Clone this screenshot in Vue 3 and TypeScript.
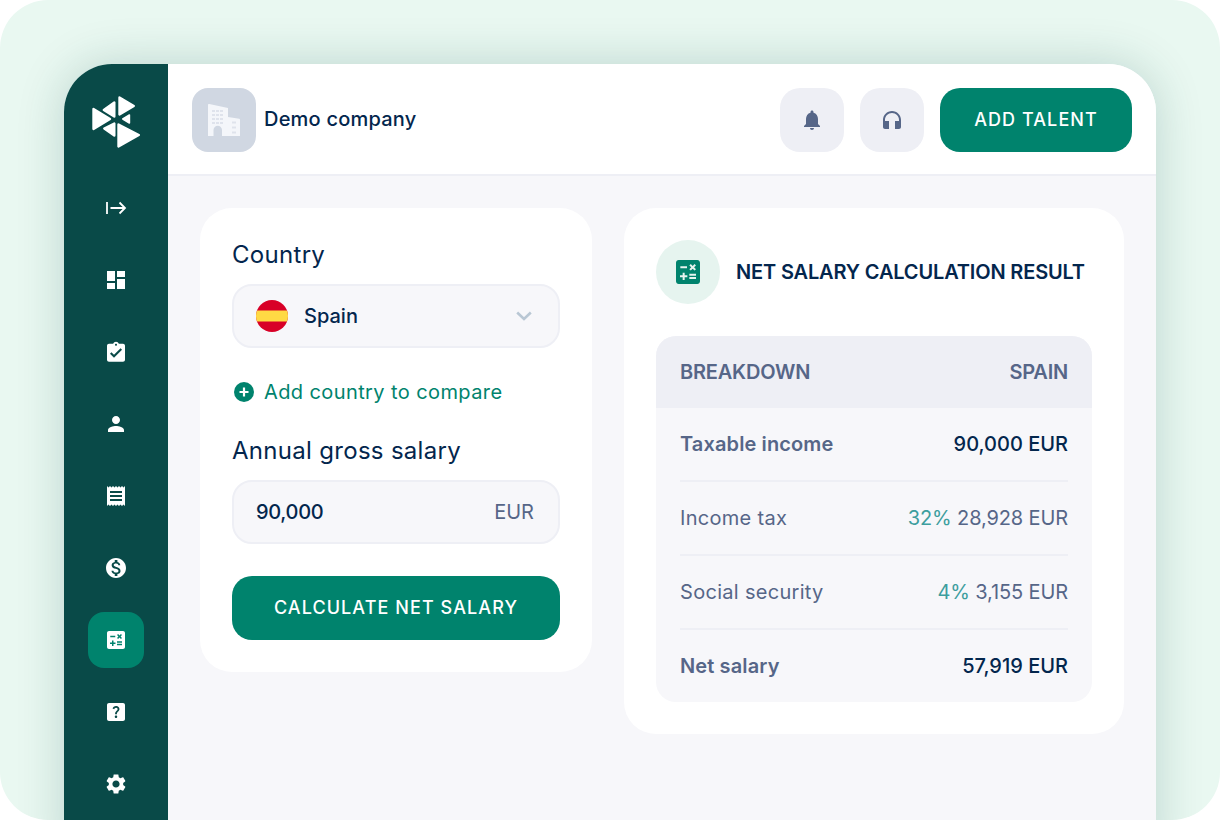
<script setup lang="ts">
const navIcons = [
  { id: 'dashboard', d: 'M3 13h8V3H3v10zm0 8h8v-6H3v6zm10 0h8V11h-8v10zm0-18v6h8V3h-8z' },
  { id: 'tasks', shift: 'translate(0 .7)', d: 'M19 3h-4.18C14.4 1.84 13.3 1 12 1c-1.3 0-2.4.84-2.82 2H5c-1.1 0-2 .9-2 2v14c0 1.1.9 2 2 2h14c1.1 0 2-.9 2-2V5c0-1.1-.9-2-2-2zm-7 0c.55 0 1 .45 1 1s-.45 1-1 1-1-.45-1-1 .45-1 1-1zm-2 14l-4-4 1.41-1.41L10 14.17l6.59-6.59L18 9l-8 8z' },
  { id: 'person', d: 'M12 12c2.21 0 4-1.79 4-4s-1.79-4-4-4-4 1.79-4 4 1.79 4 4 4zm0 2c-2.67 0-8 1.34-8 4v2h16v-2c0-2.66-5.33-4-8-4z' },
  { id: 'receipt', d: 'M18 17H6v-2h12v2zm0-4H6v-2h12v2zm0-4H6V7h12v2zM3 22l1.5-1.5L6 22l1.5-1.5L9 22l1.5-1.5L12 22l1.5-1.5L15 22l1.5-1.5L18 22l1.5-1.5L21 22V2l-1.5 1.5L18 2l-1.5 1.5L15 2l-1.5 1.5L12 2l-1.5 1.5L9 2 7.5 3.5 6 2 4.5 3.5 3 2v20z' },
  { id: 'money', d: 'M12 2C6.48 2 2 6.48 2 12s4.48 10 10 10 10-4.48 10-10S17.52 2 12 2zm1.41 16.09V20h-2.67v-1.93c-1.71-.36-3.16-1.46-3.27-3.4h1.96c.1 1.05.82 1.87 2.65 1.87 1.96 0 2.4-.98 2.4-1.59 0-.83-.44-1.61-2.67-2.14-2.48-.6-4.18-1.62-4.18-3.67 0-1.72 1.39-2.84 3.11-3.21V4h2.67v1.95c1.86.45 2.79 1.86 2.85 3.39H14.3c-.05-1.11-.64-1.87-2.22-1.87-1.5 0-2.4.68-2.4 1.64 0 .84.65 1.39 2.67 1.91s4.18 1.39 4.18 3.91c-.01 1.83-1.38 2.83-3.12 3.16z' },
  { id: 'calc', active: true, d: 'M19 3H5c-1.1 0-2 .9-2 2v14c0 1.1.9 2 2 2h14c1.1 0 2-.9 2-2V5c0-1.1-.9-2-2-2zm-5.97 4.06L14.09 6l1.41 1.41L16.91 6l1.06 1.06-1.41 1.41 1.41 1.41-1.06 1.06-1.41-1.4-1.41 1.41-1.06-1.06 1.41-1.41-1.41-1.42zm-6.78.66h5v1.5h-5v-1.5zM11.5 16h-2v2H8v-2H6v-1.5h2v-2h1.5v2h2V16zm6.5 1.25h-5v-1.5h5v1.5zm0-2.5h-5v-1.5h5v1.5z' },
  { id: 'help', d: 'M19 3H5c-1.1 0-2 .9-2 2v14c0 1.1.9 2 2 2h14c1.1 0 2-.9 2-2V5c0-1.1-.9-2-2-2zm-6.99 15c-.7 0-1.26-.56-1.26-1.26 0-.71.56-1.25 1.26-1.25.71 0 1.25.54 1.25 1.25-.01.69-.54 1.26-1.25 1.26zm3.01-7.4c-.76 1.11-1.48 1.46-1.87 2.17-.16.29-.22.48-.22 1.41h-1.82c0-.49-.08-1.29.31-1.98.49-.87 1.42-1.39 1.96-2.16.57-.81.25-2.33-1.37-2.33-1.06 0-1.58.8-1.8 1.48l-1.65-.7C9.01 7.15 10.22 6 11.99 6c1.48 0 2.49.67 3.01 1.52.44.72.7 2.07.02 3.08z' },
  { id: 'settings', d: 'M19.14 12.94c.04-.3.06-.61.06-.94 0-.32-.02-.64-.07-.94l2.03-1.58c.18-.14.23-.41.12-.61l-1.92-3.32c-.12-.22-.37-.29-.59-.22l-2.39.96c-.5-.38-1.03-.7-1.62-.94l-.36-2.54c-.04-.24-.24-.41-.48-.41h-3.84c-.24 0-.43.17-.47.41l-.36 2.54c-.59.24-1.13.57-1.62.94l-2.39-.96c-.22-.08-.47 0-.59.22L2.74 8.87c-.12.21-.08.47.12.61l2.03 1.58c-.05.3-.09.63-.09.94s.02.64.07.94l-2.03 1.58c-.18.14-.23.41-.12.61l1.92 3.32c.12.22.37.29.59.22l2.39-.96c.5.38 1.03.7 1.62.94l.36 2.54c.05.24.24.41.48.41h3.84c.24 0 .44-.17.47-.41l.36-2.54c.59-.24 1.13-.56 1.62-.94l2.39.96c.22.08.47 0 .59-.22l1.92-3.32c.12-.22.07-.47-.12-.61l-2.01-1.58zM12 15.6c-1.98 0-3.6-1.62-3.6-3.6s1.62-3.6 3.6-3.6 3.6 1.62 3.6 3.6-1.62 3.6-3.6 3.6z' },
]

const calcPath = navIcons[5].d

const rows = [
  { label: 'Income tax', pct: '32%', amount: '28,928 EUR' },
  { label: 'Social security', pct: '4%', amount: '3,155 EUR' },
]
</script>

<template>
  <div class="frame">
    <div class="app">
      <aside class="sidebar">
        <svg class="logo" viewBox="92 96 48 52" width="48" height="52">
          <g fill="#fff" stroke="#fff" stroke-width="2.4" stroke-linejoin="round">
            <polygon points="119.5,97.5 133.8,106 119.5,114.5" />
            <polygon points="93.5,109 110,119 93.5,129" />
            <polygon points="118.5,124.500 138.800,135 118.500,146.500" />
            <polygon points="114.3,102.500 114.3,116.500 103.800,110" />
            <polygon points="114.3,123.500 114.3,135.500 104.300,128.500" />
            <polygon points="129.4,115 129.4,123 122.800,119" stroke-width="1.6" />
          </g>
        </svg>
        <nav class="nav">
          <div class="nav-item">
            <svg viewBox="0 0 24 24" width="24" height="24" fill="none" stroke="#fff" stroke-width="1.8">
              <path d="M3 6v12M6.5 12H21M15.5 6.5 21 12l-5.5 5.500" />
            </svg>
          </div>
          <div v-for="icon in navIcons" :key="icon.id" class="nav-item" :class="{ active: icon.active }">
            <svg viewBox="0 0 24 24" width="24" height="24"><path :d="icon.d" :transform="icon.shift" fill="#fff" /></svg>
          </div>
        </nav>
      </aside>

      <div class="content">
        <header class="topbar">
          <div class="company">
            <div class="company-logo">
              <svg viewBox="0 0 64 64" width="64" height="64">
                <path d="M16 17a1 1 0 0 1 1.300-1L36 20v28H16z" fill="#f4f6fa" />
                <path d="M36 29l11.200 1.800a1 1 0 0 1 .8 1V48H36z" fill="#f4f6fa" />
                <path d="M21.500 48v-6a4.250 4.250 0 0 1 8.500 0v6z" fill="#d0d7e2" />
                <g fill="#dfe3ec">
                  <template v-for="y in [22, 26, 30, 34]" :key="y">
                    <rect x="20" :y="y" width="3" height="2" />
                    <rect x="24" :y="y" width="3" height="2" />
                    <rect x="28" :y="y" width="3" height="2" />
                  </template>
                  <rect x="40" y="33.500" width="4" height="2" />
                  <rect x="40" y="38.500" width="4" height="2" />
                  <rect x="40" y="43.500" width="4" height="2" />
                </g>
              </svg>
            </div>
            <span class="company-name">Demo company</span>
          </div>
          <div class="actions">
            <button class="icon-btn">
              <svg viewBox="0 0 24 24" width="24" height="24"><path fill="#566688" d="M12 22c1.100 0 2-.9 2-2h-4c0 1.100.89 2 2 2zm6-6v-5c0-3.070-1.640-5.640-4.500-6.320V4c0-.83-.67-1.500-1.500-1.500s-1.500.67-1.500 1.500v.68C7.630 5.360 6 7.920 6 11v5l-2 2v1h16v-1l-2-2z" /></svg>
            </button>
            <button class="icon-btn">
              <svg viewBox="0 0 24 24" width="24" height="24"><path fill="#566688" d="M12 3c-4.970 0-9 4.030-9 9v7c0 1.100.9 2 2 2h4v-8H5v-1c0-3.870 3.130-7 7-7s7 3.130 7 7v1h-4v8h4c1.100 0 2-.9 2-2v-7c0-4.970-4.030-9-9-9z" /></svg>
            </button>
            <button class="primary add-talent">ADD TALENT</button>
          </div>
        </header>

        <main class="main">
          <section class="card form-card">
            <label class="field-label">Country</label>
            <div class="select">
              <svg class="flag" viewBox="0 0 32 32" width="32" height="32">
                <clipPath id="flag-clip"><circle cx="16" cy="16" r="16" /></clipPath>
                <g clip-path="url(#flag-clip)">
                  <rect width="32" height="32" fill="#d80027" />
                  <rect y="10.500" width="32" height="11" fill="#ffda44" />
                </g>
              </svg>
              <span class="select-value">Spain</span>
              <svg class="chevron" viewBox="0 0 16 10" width="16" height="10" fill="none" stroke="#b9c7d4" stroke-width="2.600">
                <path d="M1.200 1.500 8 8l6.800-6.500" />
              </svg>
            </div>
            <div class="add-link">
              <svg viewBox="0 0 20 20" width="20" height="20">
                <circle cx="10" cy="10" r="10" fill="#00836d" />
                <path d="M10 5.500v9M5.500 10h9" stroke="#fff" stroke-width="2.200" />
              </svg>
              <span>Add country to compare</span>
            </div>
            <label class="field-label salary-label">Annual gross salary</label>
            <div class="select salary-input">
              <span class="select-value amount">90,000</span>
              <span class="currency">EUR</span>
            </div>
            <button class="primary calculate">CALCULATE NET SALARY</button>
          </section>

          <section class="card result-card">
            <div class="result-head">
              <div class="result-icon">
                <svg viewBox="3 3 18 18" width="24" height="24"><path :d="calcPath" fill="#00836d" /></svg>
              </div>
              <h2>NET SALARY CALCULATION RESULT</h2>
            </div>
            <div class="table">
              <div class="table-head"><span>BREAKDOWN</span><span>SPAIN</span></div>
              <div class="table-row">
                <span class="strong-label">Taxable income</span>
                <span class="strong-value">90,000 EUR</span>
              </div>
              <div v-for="row in rows" :key="row.label" class="table-row">
                <span class="row-label">{{ row.label }}</span>
                <span class="row-value"><span class="pct">{{ row.pct }}</span> {{ row.amount }}</span>
              </div>
              <div class="table-row">
                <span class="strong-label">Net salary</span>
                <span class="strong-value">57,919 EUR</span>
              </div>
            </div>
          </section>
        </main>
      </div>
    </div>
  </div>
</template>

<style>
html, body { background: #fff; }
</style>

<style scoped>
.frame {
  width: 1220px;
  height: 820px;
  box-sizing: border-box;
  padding: 64px 64px 0;
  border-radius: 48px;
  overflow: hidden;
  background: #e9f8f1;
  font-family: Inter, "Noto Sans", sans-serif;
  color: #03264d;
}

.app {
  display: flex;
  height: 800px;
  border-radius: 48px 48px 0 0;
  overflow: hidden;
  box-shadow: 0 0 48px rgba(9, 74, 72, 0.2);
}

.sidebar {
  flex: 0 0 104px;
  display: flex;
  flex-direction: column;
  align-items: center;
  padding-top: 32px;
  background: #094a48;
}

.logo { margin-bottom: 32px; }

.nav {
  display: flex;
  flex-direction: column;
  gap: 16px;
}

.nav-item {
  width: 56px;
  height: 56px;
  display: flex;
  align-items: center;
  justify-content: center;
  border-radius: 16px;
}

.nav-item.active { background: #00836d; }

.content {
  flex: 1;
  display: flex;
  flex-direction: column;
  background: #f7f7fa;
}

.topbar {
  height: 112px;
  box-sizing: border-box;
  display: flex;
  align-items: flex-start;
  justify-content: space-between;
  padding: 24px 24px 0;
  background: #fff;
  border-bottom: 2px solid #eeeff5;
}

.company {
  display: flex;
  align-items: center;
  gap: 8px;
}

.company-logo {
  width: 64px;
  height: 64px;
  border-radius: 16px;
  background: #d0d7e2;
}

.company-name {
  padding-bottom: 2px;
  font-size: 20px;
  font-weight: 500;
  letter-spacing: 0.22px;
}

.actions {
  display: flex;
  gap: 16px;
}

button {
  border: none;
  padding: 0;
  font-family: inherit;
}

.icon-btn {
  width: 64px;
  height: 64px;
  display: flex;
  align-items: center;
  justify-content: center;
  border-radius: 20px;
  background: #eeeff5;
}

.primary {
  height: 64px;
  padding-bottom: 2px;
  border-radius: 20px;
  background: #00836d;
  color: #fff;
  font-size: 18px;
  font-weight: 500;
  letter-spacing: 1.08px;
}

.add-talent { width: 192px; }

.main {
  flex: 1;
  display: flex;
  align-items: flex-start;
  gap: 32px;
  padding: 32px;
}

.card {
  box-sizing: border-box;
  padding: 32px;
  border-radius: 32px;
  background: #fff;
}

.form-card {
  width: 392px;
  height: 464px;
  display: flex;
  flex-direction: column;
}

.field-label {
  font-size: 24px;
  line-height: 30px;
  margin-bottom: 14px;
  letter-spacing: 0.3px;
}

.select {
  height: 64px;
  box-sizing: border-box;
  display: flex;
  align-items: center;
  padding: 0 26px 0 22px;
  border: 2px solid #eeeff5;
  border-radius: 20px;
  background: #f7f7fa;
}

.flag { margin-right: 16px; }

.select-value {
  flex: 1;
  font-size: 20px;
  font-weight: 500;
}

.select-value.amount { letter-spacing: -0.3px; }

.salary-input { padding-right: 24px; }

.add-link {
  display: flex;
  align-items: center;
  gap: 10px;
  margin: 32px 0 0 2px;
  height: 24px;
  font-size: 20px;
  letter-spacing: 0.4px;
  color: #00836d;
}

.salary-label { margin-top: 32px; }

.currency {
  font-size: 20px;
  color: #566688;
}

.calculate { margin-top: 32px; }

.result-card {
  width: 500px;
  height: 526px;
}

.result-head {
  display: flex;
  align-items: center;
  gap: 16px;
  margin-bottom: 32px;
}

.result-icon {
  width: 64px;
  height: 64px;
  display: flex;
  align-items: center;
  justify-content: center;
  border-radius: 50%;
  background: #e6f4ef;
}

h2 {
  margin: 0;
  font-size: 20px;
  font-weight: 600;
  letter-spacing: -0.16px;
  white-space: nowrap;
}

.table {
  border-radius: 20px;
  overflow: hidden;
  background: #f7f7fa;
  font-size: 20px;
  color: #566688;
}

.table-head {
  height: 72px;
  display: flex;
  align-items: center;
  justify-content: space-between;
  padding: 0 24px;
  background: #eeeff5;
  font-weight: 600;
  letter-spacing: -0.2px;
}

.table-row {
  height: 72px;
  display: flex;
  align-items: center;
  justify-content: space-between;
  margin: 0 24px;
}

.table-row + .table-row {
  height: 74px;
  box-sizing: border-box;
  border-top: 2px solid #eeeff5;
}

.row-label { letter-spacing: 0.3px; }

.row-value { letter-spacing: -0.12px; }

.strong-label {
  font-weight: 600;
  letter-spacing: 0.12px;
}

.strong-value {
  font-weight: 500;
  color: #03264d;
}

.pct { color: #3d9e9e; }
</style>
